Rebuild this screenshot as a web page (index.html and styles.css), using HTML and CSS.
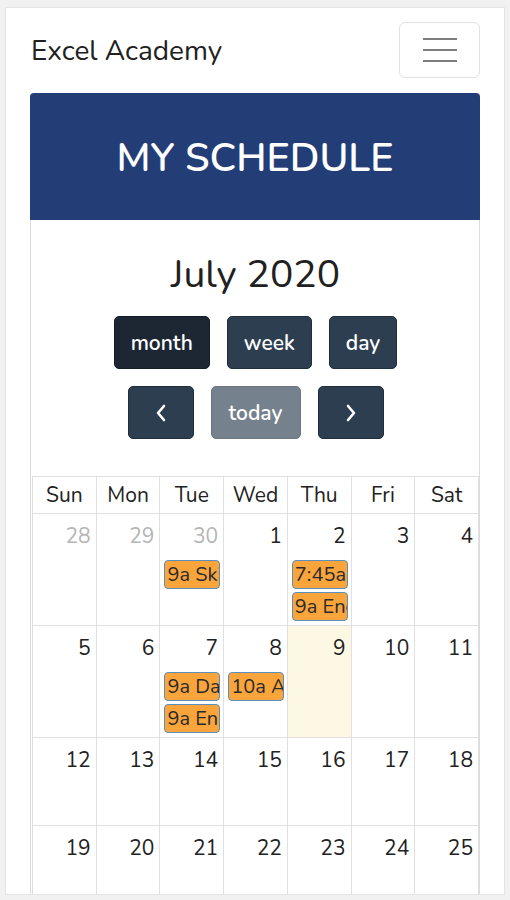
FILE: index.html
```html
<!DOCTYPE html>
<html>
<head>
<meta charset="utf-8">
<title>My Schedule</title>
<link rel="stylesheet" href="styles.css">
</head>
<body>
<div class="page">
  <nav class="navbar">
    <span class="brand">Excel Academy</span>
    <button class="toggler" type="button"><span></span><span></span><span></span></button>
  </nav>

  <div class="card">
    <div class="card-header">MY SCHEDULE</div>
    <div class="card-body">
      <h2 class="cal-title">July 2020</h2>
      <div class="btn-row">
        <button class="btn active">month</button>
        <button class="btn">week</button>
        <button class="btn">day</button>
      </div>
      <div class="btn-row">
        <button class="btn icon"><svg width="12" height="18" viewBox="0 0 12 18"><polyline points="9,2 3,9 9,16" fill="none" stroke="#fff" stroke-width="2.6" stroke-linecap="round" stroke-linejoin="round"/></svg></button>
        <button class="btn disabled">today</button>
        <button class="btn icon"><svg width="12" height="18" viewBox="0 0 12 18"><polyline points="3,2 9,9 3,16" fill="none" stroke="#fff" stroke-width="2.6" stroke-linecap="round" stroke-linejoin="round"/></svg></button>
      </div>

      <div class="month">
        <div class="dow"><span>Sun</span><span>Mon</span><span>Tue</span><span>Wed</span><span>Thu</span><span>Fri</span><span>Sat</span></div>
        <div class="week">
          <div class="day other"><span class="num">28</span></div>
          <div class="day other"><span class="num">29</span></div>
          <div class="day other"><span class="num">30</span><span class="event">9a Skills</span></div>
          <div class="day"><span class="num">1</span></div>
          <div class="day"><span class="num">2</span><span class="event">7:45a Meeting</span><span class="event">9a English</span></div>
          <div class="day"><span class="num">3</span></div>
          <div class="day"><span class="num">4</span></div>
        </div>
        <div class="week">
          <div class="day"><span class="num">5</span></div>
          <div class="day"><span class="num">6</span></div>
          <div class="day"><span class="num">7</span><span class="event">9a Data</span><span class="event">9a English</span></div>
          <div class="day"><span class="num">8</span><span class="event">10a Art</span></div>
          <div class="day today"><span class="num">9</span></div>
          <div class="day"><span class="num">10</span></div>
          <div class="day"><span class="num">11</span></div>
        </div>
        <div class="week">
          <div class="day"><span class="num">12</span></div>
          <div class="day"><span class="num">13</span></div>
          <div class="day"><span class="num">14</span></div>
          <div class="day"><span class="num">15</span></div>
          <div class="day"><span class="num">16</span></div>
          <div class="day"><span class="num">17</span></div>
          <div class="day"><span class="num">18</span></div>
        </div>
        <div class="week">
          <div class="day"><span class="num">19</span></div>
          <div class="day"><span class="num">20</span></div>
          <div class="day"><span class="num">21</span></div>
          <div class="day"><span class="num">22</span></div>
          <div class="day"><span class="num">23</span></div>
          <div class="day"><span class="num">24</span></div>
          <div class="day"><span class="num">25</span></div>
        </div>
      </div>
    </div>
  </div>
</div>
</body>
</html>
```

FILE: styles.css
```css
html, body {
  height: 100%;
}

body {
  margin: 0;
  padding: 7px 5px 0;
  box-sizing: border-box;
  background: #f1f1f1;
  font-family: 'Nunito', 'Lato', sans-serif;
  color: #212121;
  overflow: hidden;
}

.page {
  height: 888px;
  box-sizing: border-box;
  background: #fff;
  border: 1px solid #e4e4e4;
  padding: 0 24px;
  overflow: hidden;
}

.navbar {
  display: flex;
  align-items: center;
  justify-content: space-between;
  height: 85px;
}

.brand {
  font-size: 28px;
  margin-left: 1px;
}

.toggler {
  width: 81px;
  height: 56px;
  margin-top: -1px;
  background: #fff;
  border: 1px solid #e2e2e2;
  border-radius: 6px;
  display: flex;
  flex-direction: column;
  align-items: center;
  justify-content: center;
  gap: 9px;
  padding: 0;
}

.toggler span {
  display: block;
  width: 34px;
  height: 2px;
  background: #7d7d7d;
}

.card {
  border-radius: 4px 4px 0 0;
  overflow: hidden;
}

.card-header {
  height: 127px;
  background: #233d77;
  color: #fff;
  font-size: 39.5px;
  font-weight: 600;
  display: flex;
  align-items: center;
  justify-content: center;
  padding-top: 2px;
  box-sizing: border-box;
}

.card-body {
  border-left: 1px solid #dcdcdc;
  border-right: 1px solid #dcdcdc;
  padding: 0 0 0 1px;
}

.cal-title {
  margin: 0;
  padding-top: 33px;
  height: 63px;
  font-size: 39px;
  font-weight: normal;
  text-align: center;
  line-height: 44px;
}

.btn-row {
  display: flex;
  justify-content: center;
  gap: 17px;
  margin-top: 17px;
}

.cal-title + .btn-row {
  margin-top: 0;
}

.btn {
  height: 53px;
  padding: 0 16px;
  font-family: inherit;
  font-size: 21px;
  font-weight: 600;
  color: #fff;
  background: #2c3e50;
  border: 1px solid #202e3c;
  border-radius: 5px;
  display: flex;
  align-items: center;
  justify-content: center;
}

.btn.active {
  background: #1c2733;
  border-color: #151e27;
}

.btn.icon {
  width: 66px;
}

.btn.disabled {
  opacity: .65;
  width: 90px;
}

.month {
  margin-top: 37px;
  border-left: 1px solid #dedede;
}

.dow, .week {
  display: grid;
  grid-template-columns: repeat(7, 1fr);
}

.dow span {
  height: 36px;
  line-height: 36px;
  text-align: center;
  font-size: 21px;
  border: 1px solid #e0e0e0;
  border-width: 1px 1px 1px 0;
}

.day {
  min-height: 88px;
  border-right: 1px solid #e0e0e0;
  border-bottom: 1px solid #e0e0e0;
  display: flex;
  flex-direction: column;
  align-items: stretch;
  padding-bottom: 4px;
  box-sizing: border-box;
  min-width: 0;
}

.day.today {
  background: #fcf8e3;
}

.num {
  text-align: right;
  font-size: 21px;
  padding: 8px 5px 0 0;
  height: 29px;
}

.day.other .num {
  color: #b5b5b5;
}

.event {
  margin: 9px 3px 0 4px;
  height: 27px;
  line-height: 27px;
  padding: 0 2px;
  font-size: 20px;
  color: #2a2a2a;
  background: #f9a53c;
  border: 1px solid #5b8fbf;
  border-radius: 4px;
  white-space: nowrap;
  overflow: hidden;
}

.event + .event {
  margin-top: 3px;
}
```
